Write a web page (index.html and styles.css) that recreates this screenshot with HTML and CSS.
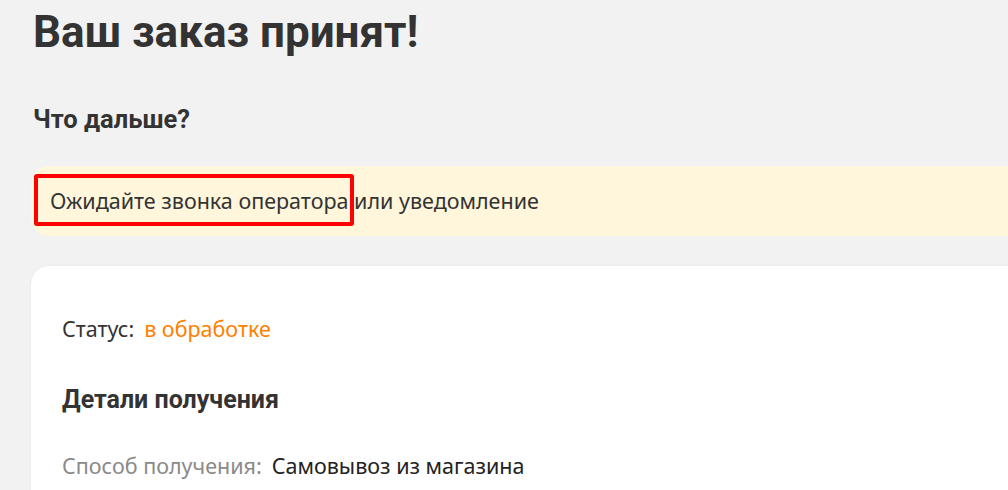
FILE: index.html
```html
<!DOCTYPE html>
<html>
<head>
    <meta charset="UTF-8">
    <meta name="viewport" content="width=device-width, initial-scale=1.0">
    <link rel="stylesheet" href="styles.css">
</head>
<body>
    <div class="page">
        <h1>Ваш заказ принят!</h1>
        <h2>Что дальше?</h2>

        <div class="notice">
            <p><span class="marked">Ожидайте звонка оператора</span> или уведомление</p>
        </div>

        <div class="card">
            <div class="row">
                <span class="label-dark">Статус:</span>
                <span class="status">в обработке</span>
            </div>

            <h3>Детали получения</h3>

            <div class="row">
                <span class="label">Способ получения:</span>
                <span class="value">Самовывоз из магазина</span>
            </div>
        </div>
    </div>
</body>
</html>
```

FILE: styles.css
```css
html, body {
    margin: 0;
    height: 100%;
    overflow: hidden;
}
body {
    font-family: "Noto Sans", Roboto, Arial, sans-serif;
    background-color: #f2f2f2;
    color: #333;
}
.page {
    width: 1060px;
    padding-left: 31px;
}
h1, h2, h3 {
    font-family: Roboto, "Noto Sans", Arial, sans-serif;
    font-weight: 700;
}
h1 {
    margin: 4px 0 0 2px;
    font-size: 44px;
    line-height: 56px;
}
h2 {
    margin: 44px 0 0 2px;
    font-size: 25.5px;
    line-height: 30px;
}
.notice {
    margin-top: 32px;
    height: 70px;
    padding: 0 19px;
    background-color: #fff6db;
    border-radius: 18px;
    display: flex;
    align-items: center;
}
.notice p {
    margin: 0;
    font-size: 21.5px;
    line-height: 24px;
}
.marked {
    position: relative;
}
.marked::after {
    content: "";
    position: absolute;
    top: -12px;
    bottom: -11px;
    left: -16px;
    right: -6px;
    border: 4px solid #ff0000;
    border-radius: 3px;
}
.card {
    margin-top: 30px;
    height: 400px;
    padding: 51px 31px 0;
    background-color: #fff;
    border-radius: 18px;
    box-shadow: 0 0 2px rgba(0, 0, 0, 0.08);
}
.row {
    display: flex;
    gap: 10px;
    font-size: 21.5px;
    line-height: 24px;
}
.label-dark {
    color: #333;
}
.status {
    color: #ff7f00;
}
.label {
    color: #8a8a8a;
}
.value {
    color: #222;
}
h3 {
    margin: 44px 0 39px;
    font-size: 25px;
    line-height: 30px;
}
```
